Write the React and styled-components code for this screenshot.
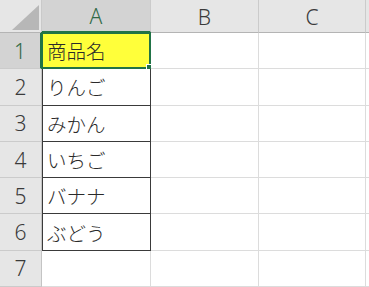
import styled, { createGlobalStyle } from 'styled-components'

const GlobalStyle = createGlobalStyle`
  html, body {
    margin: 0;
    padding: 0;
    background: #fff;
  }
  body {
    font-family: "Noto Sans CJK JP", "Noto Sans", sans-serif;
    overflow: hidden;
  }
`

const columns = ['A', 'B', 'C', '']
const items = ['商品名', 'りんご', 'みかん', 'いちご', 'バナナ', 'ぶどう', '']

export default function App() {
  return (
    <>
      <GlobalStyle />
      <Sheet>
        <Corner>
          <svg width="42" height="33" viewBox="0 0 42 33">
            <polygon points="39,5 39,30 12,30" fill="#b7b7b7" />
          </svg>
        </Corner>
        {columns.map((col, i) => (
          <ColHeader key={i} $selected={col === 'A'}>{col}</ColHeader>
        ))}
        {items.map((item, r) => (
          <Row key={r} index={r} item={item} />
        ))}
      </Sheet>
    </>
  )
}

function Row({ index, item }) {
  const inTable = index < 6
  return (
    <>
      <RowHeader $selected={index === 0}>{index + 1}</RowHeader>
      <Cell $table={inTable} $fill={index === 0 ? '#ffff3a' : '#fff'}>
        {item}
        {index === 0 && <Active><Handle /></Active>}
      </Cell>
      <Cell />
      <Cell />
      <Cell />
    </>
  )
}

const Sheet = styled.div`
  display: grid;
  grid-template-columns: 42px 109px 108px 107px 1fr;
  grid-template-rows: 33px repeat(7, 36.3px);
  width: 369px;
  height: 287px;
  overflow: hidden;
`

const Corner = styled.div`
  background: #e6e6e6;
  border-right: 1px solid #c9c9c9;
  border-bottom: 1px solid #b4b4b4;
  svg { display: block; }
`

const ColHeader = styled.div`
  display: flex;
  align-items: center;
  justify-content: center;
  background: ${p => p.$selected ? '#d3d3d3' : '#e6e6e6'};
  color: ${p => p.$selected ? '#2f6946' : '#3a3a3a'};
  border-right: 1px solid #cbcbcb;
  border-bottom: ${p => p.$selected ? '2px solid #217346' : '1px solid #b4b4b4'};
  font-family: "Noto Sans", sans-serif;
  font-weight: 300;
  font-size: 21px;
  padding-top: 1px;
`

const RowHeader = styled.div`
  display: flex;
  align-items: center;
  justify-content: center;
  background: ${p => p.$selected ? '#d3d3d3' : '#e6e6e6'};
  color: ${p => p.$selected ? '#2f6946' : '#3a3a3a'};
  border-right: ${p => p.$selected ? '2px solid #217346' : '1px solid #c4c4c4'};
  border-bottom: 1px solid #cbcbcb;
  font-family: "Noto Sans", sans-serif;
  font-weight: 300;
  font-size: 21px;
`

const Cell = styled.div`
  position: relative;
  display: flex;
  align-items: center;
  padding-left: 5px;
  background: ${p => p.$fill || '#fff'};
  border-right: 1px solid ${p => p.$table ? '#3a3a3a' : '#dcdcdc'};
  border-bottom: 1px solid ${p => p.$table ? '#3a3a3a' : '#dcdcdc'};
  box-shadow: ${p => p.$table ? 'inset 1px 0 0 #3a3a3a' : 'none'};
  color: #2a2a2a;
  font-weight: 300;
  font-size: 19.5px;
  white-space: nowrap;
`

const Active = styled.div`
  position: absolute;
  inset: -1px -1px -1px -1px;
  border: 2px solid #217346;
  pointer-events: none;
`

const Handle = styled.div`
  position: absolute;
  right: -4px;
  bottom: -4px;
  width: 5px;
  height: 5px;
  background: #217346;
  border: 1px solid #fff;
`
